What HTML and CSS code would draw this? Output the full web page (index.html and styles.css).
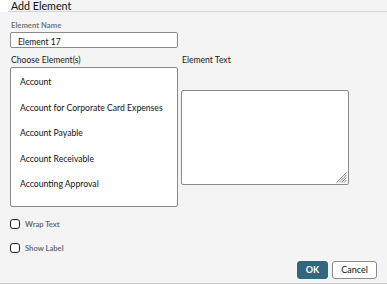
FILE: index.html
```html
<!DOCTYPE html>
<html>
<head>
<meta charset="utf-8">
<link rel="stylesheet" href="styles.css">
</head>
<body>
<div class="top">
  <div class="header">Add Element</div>
</div>
<div class="content">
  <div class="field-label">Element Name</div>
  <div class="input">Element 17</div>
  <div class="columns">
    <div class="col-left">
      <div class="col-label">Choose Element(s)</div>
      <div class="listbox">
        <div class="item">Account</div>
        <div class="item">Account for Corporate Card Expenses</div>
        <div class="item">Account Payable</div>
        <div class="item">Account Receivable</div>
        <div class="item">Accounting Approval</div>
      </div>
    </div>
    <div class="col-right">
      <div class="col-label">Element Text</div>
      <div class="textarea">
        <svg class="grip" width="11" height="11" viewBox="0 0 11 11">
          <path d="M10.5 0.5 L0.5 10.5 M10.5 3 L3 10.5 M10.5 5.5 L5.5 10.5 M10.5 8 L8 10.5" stroke="#8a8a8a" stroke-width="1" fill="none"/>
        </svg>
      </div>
    </div>
  </div>
  <div class="check-row first"><span class="box"></span><span class="check-label">Wrap Text</span></div>
  <div class="check-row second"><span class="box"></span><span class="check-label">Show Label</span></div>
  <div class="buttons">
    <div class="btn ok">OK</div>
    <div class="btn cancel">Cancel</div>
  </div>
</div>
</body>
</html>
```
FILE: styles.css
```css
html, body {
  margin: 0;
  padding: 0;
}
body {
  width: 387px;
  height: 284px;
  overflow: hidden;
  background: #f4f4f4;
  font-family: "Lato", "Open Sans", sans-serif;
  color: #222;
  position: relative;
}
.top {
  background: #ffffff;
  height: 12px;
}
.header {
  margin-left: 8px;
  height: 11px;
  background: #f4f4f4;
  border-bottom: 1px solid #d4d4d4;
  padding-left: 3px;
  font-size: 10.7px;
  line-height: 11px;
  color: #111;
}
.content {
  padding: 0 10px;
}
.field-label {
  margin-top: 8px;
  height: 10px;
  font-size: 7.7px;
  font-weight: bold;
  color: #777;
  line-height: 10px;
  padding-left: 1px;
}
.input {
  margin-top: 2px;
  width: 159px;
  height: 12px;
  padding-top: 2px;
  border: 1px solid #8a8a8a;
  border-radius: 2px;
  background: #fff;
  font-size: 8.5px;
  line-height: 14px;
  padding-left: 7px;
  color: #111;
  overflow: hidden;
}
.columns {
  display: flex;
  gap: 3px;
  margin-top: 7px;
}
.col-left, .col-right {
  width: 168px;
}
.col-label {
  font-size: 8.6px;
  line-height: 10px;
  height: 10px;
  color: #1a1a1a;
  padding-left: 1px;
  white-space: nowrap;
}
.listbox {
  margin-top: 2px;
  height: 140px;
  border: 1px solid #8a8a8a;
  border-radius: 2px;
  background: #fff;
  box-sizing: border-box;
  padding-top: 1px;
}
.item {
  font-size: 8.65px;
  line-height: 25.5px;
  padding-left: 9px;
  color: #111;
  white-space: nowrap;
}
.textarea {
  margin-top: 25px;
  height: 95px;
  box-sizing: border-box;
  border: 1px solid #8a8a8a;
  border-radius: 2px;
  background: #fff;
  position: relative;
}
.grip {
  position: absolute;
  right: 1px;
  bottom: 1px;
}
.check-row {
  display: flex;
  align-items: center;
  height: 11px;
}
.check-row.first {
  margin-top: 11px;
}
.check-row.second {
  margin-top: 13px;
}
.box {
  width: 8px;
  height: 8px;
  border: 1.5px solid #222;
  border-radius: 3px;
  background: #fff;
  margin-right: 5px;
  flex: none;
}
.check-label {
  font-size: 7.6px;
  font-weight: bold;
  color: #6a6e78;
  white-space: nowrap;
}
.buttons {
  display: flex;
  justify-content: flex-end;
  gap: 4px;
  margin-top: 8px;
}
.btn {
  height: 18px;
  box-sizing: border-box;
  border-radius: 3px;
  font-size: 9px;
  line-height: 16px;
  text-align: center;
}
.ok {
  width: 31px;
  background: #34657f;
  color: #fff;
  font-weight: bold;
  border: 1px solid #34657f;
}
.cancel {
  width: 45px;
  background: #fff;
  color: #111;
  border: 1px solid #8a8a8a;
}
body::after {
  content: "";
  position: absolute;
  left: 0;
  right: 0;
  bottom: 0;
  height: 1px;
  background: #c8c8c8;
}
```
